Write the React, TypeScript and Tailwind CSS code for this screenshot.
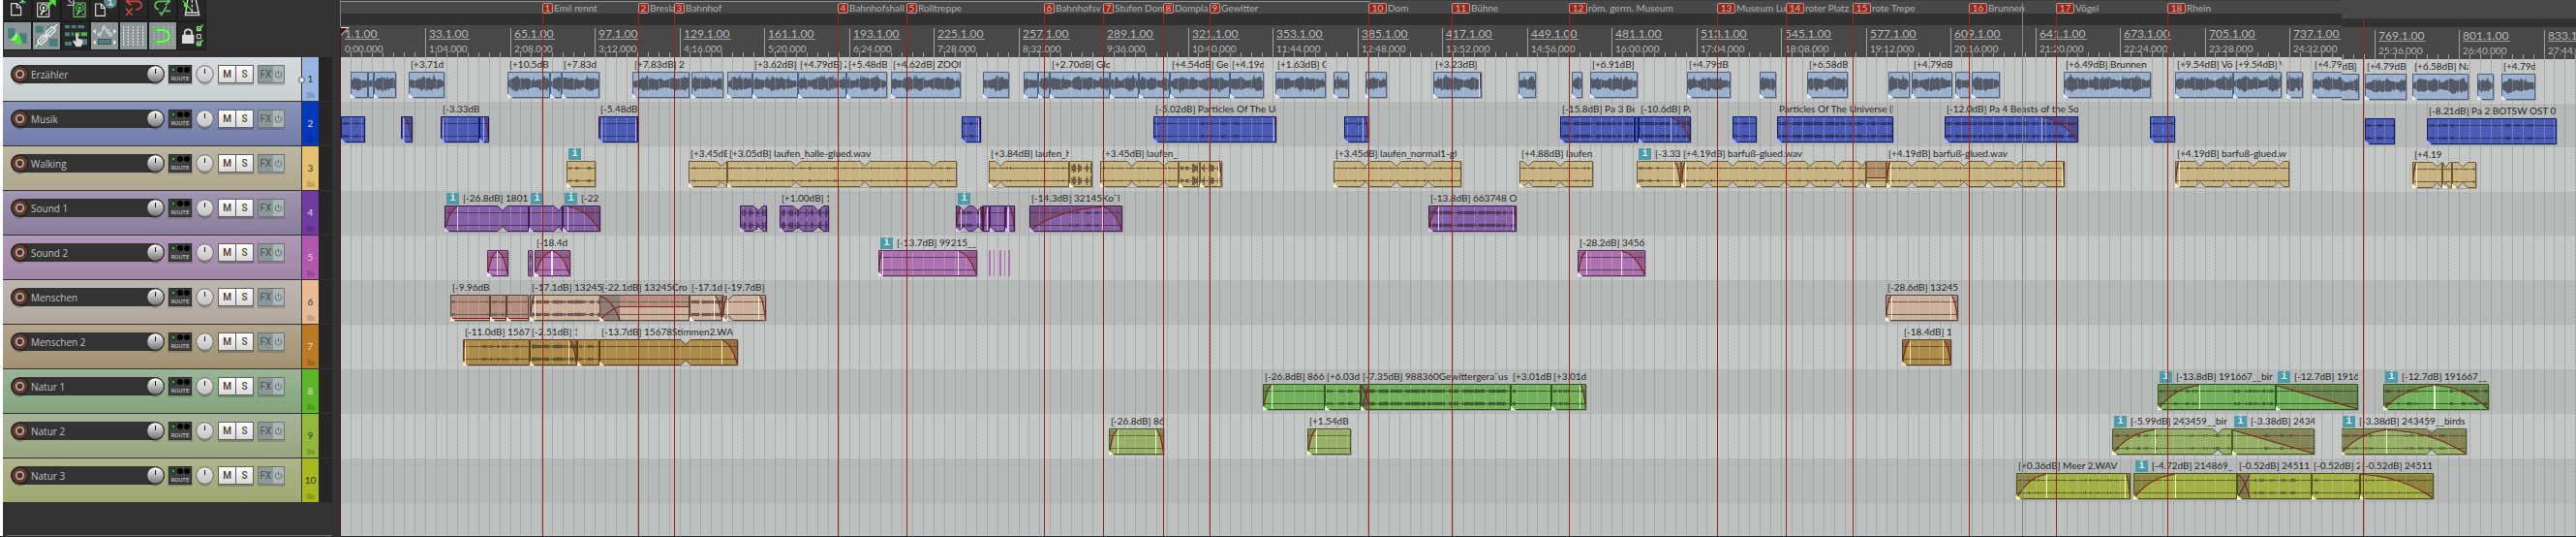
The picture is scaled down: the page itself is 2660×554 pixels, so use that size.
import type { ReactNode } from "react";

/* ---------- model ---------- */

type WaveKind = "voice" | "none" | "dots" | "sparse" | "thick" | "burst";

interface Clip {
  start: number;
  end: number;
  label: string;
  info?: boolean;
  fadeIn?: number;
  fadeOut?: number;
  linear?: boolean;
  notches?: number[];
  wave?: WaveKind;
  level?: number;
  cross?: number;
}

interface Track {
  name: string;
  header: string;
  tab: string;
  tabText: string;
  fill: string;
  edge: string;
  ink: string;
  glow: string;
  wave: WaveKind;
  clips: Clip[];
}

const c = (start: number, end: number, label = "", more: Partial<Clip> = {}): Clip => ({ start, end, label, ...more });

const tracks: Track[] = [
  {
    name: "Erzähler", header: "bg-linear-to-b from-[#d5dadd] to-[#cacfd2]", tab: "bg-[#98b6e2]", tabText: "text-[#333333]",
    fill: "#9bb1ce", edge: "#4a5f7c", ink: "#535a66", glow: "#e4edf8", wave: "voice",
    clips: [
      c(362, 380), c(380, 386), c(386, 409), c(422, 459, "[+3.71d"),
      c(524, 568, "[+10.5dB"), c(568, 580), c(580, 619, "[+7.83d"), c(653, 712, "[+7.83dB] 2"), c(714, 747),
      c(751, 777), c(777, 824, "[+3.62dB]"), c(824, 874, "[+4.79dB] Z"), c(874, 916, "[+5.48dB"), c(920, 992, "[+4.62dB] ZOOM"),
      c(1015, 1042), c(1057, 1072), c(1072, 1084), c(1084, 1146, "[+2.70dB] Glo"), c(1146, 1176), c(1176, 1208),
      c(1208, 1270, "[+4.54dB] Ge"), c(1270, 1305, "[+4.19d"), c(1317, 1369, "[+1.63dB] G"), c(1377, 1393), c(1410, 1432),
      c(1480, 1530, "[+3.23dB]", { fadeOut: 2 }), c(1568, 1586), c(1623, 1634), c(1642, 1691, "[+6.91dB]"),
      c(1742, 1787, "[+4.79dB"), c(1817, 1834), c(1866, 1908, "[+6.58dB"), c(1950, 1972), c(1974, 2016, "[+4.79dB"),
      c(2019, 2034), c(2036, 2065), c(2131, 2221, "[+6.49dB] Brunnen"), c(2246, 2306, "[+9.54dB] Vö"), c(2306, 2356, "[+9.54dB] V"),
      c(2361, 2378), c(2388, 2436, "[+4.79dB]"), c(2442, 2485, "[+4.79dB"), c(2491, 2549, "[+6.58dB] Na"), c(2558, 2575), c(2583, 2618, "[+4.79d"),
    ],
  },
  {
    name: "Musik", header: "bg-linear-to-b from-[#8a95ba] to-[#747ba9]", tab: "bg-[#0039b9]", tabText: "text-[#dddddd]",
    fill: "#4c5cb6", edge: "#0b1c68", ink: "#2f3468", glow: "#a8b4ff", wave: "sparse",
    clips: [
      c(352, 377), c(414, 426, "", { fadeIn: 2, fadeOut: 9, wave: "none" }), c(455, 495, "[-3.33dB", { fadeIn: 2, wave: "none" }),
      c(495, 505, "", { fadeOut: 5, wave: "none" }), c(618, 659, "[-5.48dB", { fadeIn: 3, fadeOut: 2, wave: "none" }),
      c(993, 1013, "", { fadeOut: 2 }), c(1191, 1318, "[-5.02dB] Particles Of The Ur", { fadeOut: 2 }), c(1388, 1414, "", { fadeOut: 6 }),
      c(1611, 1688, "[-15.8dB] Pa 3 Be", { wave: "thick" }), c(1688, 1692), c(1692, 1746, "[-10.6dB] Pa", { fadeOut: 20, wave: "thick" }),
      c(1789, 1814), c(1835, 1955, "Particles Of The Universe (I", { wave: "thick" }),
      c(2008, 2146, "[-12.0dB] Pa 4 Beasts of the So", { fadeOut: 37, wave: "thick" }), c(2220, 2246),
      c(2442, 2473), c(2506, 2640, "[-8.21dB] Pa 2 BOTSW OST 07"),
    ],
  },
  {
    name: "Walking", header: "bg-linear-to-b from-[#bbb6a2] to-[#b0a78f]", tab: "bg-[#e3c070]", tabText: "text-[#333333]",
    fill: "#c9b381", edge: "#6a5830", ink: "#6b5e42", glow: "#fff4cf", wave: "dots",
    clips: [
      c(585, 615, "", { info: true, wave: "sparse" }), c(711, 751, "[+3.45dB", { notches: [745] }),
      c(751, 988, "[+3.05dB] laufen_halle-glued.wav", { notches: [822, 893, 964] }),
      c(1021, 1104, "[+3.84dB] laufen_h", { notches: [1033] }), c(1104, 1128, "", { wave: "burst" }),
      c(1136, 1217, "[+3.45dB] laufen_", { notches: [1169, 1202] }), c(1217, 1239, "", { wave: "burst" }), c(1239, 1262, "", { fadeOut: 3, wave: "burst" }),
      c(1377, 1509, "[+3.45dB] laufen_normal1-gl", { notches: [1410, 1442, 1475] }), c(1569, 1645, "[+4.88dB] laufen", { notches: [1578, 1611] }),
      c(1690, 1736, "[-3.33", { info: true, fadeOut: 7, wave: "sparse" }),
      c(1736, 1927, "[+4.19dB] barfuß-glued.wav", { fadeIn: 4, notches: [1763, 1789, 1817, 1843, 1869, 1897, 1923] }),
      c(1927, 1948, "", { level: 17, wave: "none" }),
      c(1948, 2132, "[+4.19dB] barfuß-glued.wav", { fadeIn: 4, fadeOut: 2, notches: [1974, 2002, 2028, 2054, 2082, 2108] }),
      c(2246, 2364, "[+4.19dB] barfuß-glued.w", { fadeIn: 4, notches: [2272, 2299, 2327, 2353] }),
      c(2488, 2489), c(2491, 2522, "[+4.19", { fadeIn: 4, notches: [2517] }), c(2522, 2532, "", { notches: [2525] }), c(2532, 2557, "", { notches: [2543] }),
    ],
  },
  {
    name: "Sound 1", header: "bg-linear-to-b from-[#a096b0] to-[#8b7d9d]", tab: "bg-[#703a9e]", tabText: "text-[#dddddd]",
    fill: "#8661a5", edge: "#3c1c58", ink: "#4d3b5e", glow: "#dfc4f8", wave: "none",
    clips: [
      c(459, 546, "[-26.8dB] 1801", { info: true, fadeIn: 13, notches: [519] }), c(546, 581, "", { info: true, notches: [577] }),
      c(581, 620, "[-22", { info: true, fadeOut: 33 }), c(764, 792, "", { notches: [783], wave: "burst" }),
      c(805, 856, "[+1.00dB] 1", { notches: [824, 845], wave: "burst" }), c(987, 1015, "", { info: true, fadeIn: 5, fadeOut: 3, notches: [995, 1010], wave: "thick" }),
      c(1015, 1022, "", { fadeIn: 4 }), c(1022, 1038), c(1038, 1048, "", { fadeIn: 2, fadeOut: 6 }),
      c(1063, 1159, "[-14.3dB] 32145Ko¨l", { fadeIn: 75, fadeOut: 20, wave: "sparse" }), c(1475, 1566, "[-13.8dB] 663748 O", { fadeIn: 10, fadeOut: 3, wave: "thick" }),
    ],
  },
  {
    name: "Sound 2", header: "bg-linear-to-b from-[#ad9ab5] to-[#a085a6]", tab: "bg-[#b158af]", tabText: "text-[#dddddd]",
    fill: "#ad72b0", edge: "#5d2e64", ink: "#5a3a60", glow: "#ffe4ff", wave: "none",
    clips: [
      c(503, 525, "", { fadeIn: 10, fadeOut: 11 }), c(545, 550, "", { wave: "burst" }), c(552, 589, "[-18.4d", { fadeIn: 17, fadeOut: 18 }),
      c(907, 1009, "[-13.7dB] 99215__", { info: true, fadeIn: 4, fadeOut: 19 }),
      c(1021, 1023), c(1026, 1027), c(1032, 1034), c(1037, 1038), c(1041, 1043),
      c(1629, 1699, "[-28.2dB] 3456", { fadeIn: 9, fadeOut: 24 }),
    ],
  },
  {
    name: "Menschen", header: "bg-linear-to-b from-[#beb7af] to-[#b1a79e]", tab: "bg-[#e9bb95]", tabText: "text-[#333333]",
    fill: "#cdb19c", edge: "#594438", ink: "#6c5950", glow: "#fff6e4", wave: "none",
    clips: [
      c(465, 506, "[-9.96dB", { level: 24, wave: "sparse" }), c(506, 523, "", { level: 24, wave: "sparse" }), c(523, 546, "", { level: 24, wave: "dots" }),
      c(547, 641, "[-17.1dB] 13245", { fadeIn: 5, wave: "thick" }), c(619, 712, "[-22.1dB] 13245Cro", { cross: 21, level: 12 }),
      c(712, 746, "[-17.1d", { fadeOut: 8, wave: "thick" }), c(746, 791, "[-19.7dB]", { fadeIn: 5, fadeOut: 7, notches: [752] }),
      c(1947, 2022, "[-28.6dB] 13245", { fadeIn: 6, fadeOut: 7 }),
    ],
  },
  {
    name: "Menschen 2", header: "bg-linear-to-b from-[#b1a58b] to-[#a29272]", tab: "bg-[#ba7b24]", tabText: "text-[#dddddd]",
    fill: "#af8b4a", edge: "#57401a", ink: "#5e4e2e", glow: "#ffe9b0", wave: "sparse",
    clips: [
      c(478, 547, "[-11.0dB] 1567", { fadeIn: 2 }), c(547, 596, "[-2.51dB] 1", { fadeOut: 8, wave: "thick" }), c(596, 619),
      c(619, 762, "[-13.7dB] 15678Stimmen2.WA", { fadeOut: 16, notches: [708], wave: "none" }), c(1964, 2015, "[-18.4dB] 1", { fadeIn: 8, fadeOut: 8, wave: "none" }),
    ],
  },
  {
    name: "Natur 1", header: "bg-linear-to-b from-[#9ab597] to-[#83a37b]", tab: "bg-[#5fb528]", tabText: "text-[#dddddd]",
    fill: "#72b059", edge: "#2c561b", ink: "#3c5a32", glow: "#dcffd0", wave: "sparse",
    clips: [
      c(1304, 1368, "[-26.8dB] 866", { fadeIn: 9, wave: "none" }), c(1368, 1405, "[+6.03d"),
      c(1405, 1560, "[-7.35dB] 988360Gewittergera¨us", { cross: 9, wave: "thick" }), c(1560, 1602, "[+3.01dB"), c(1602, 1638, "[+3.01d", { fadeOut: 6 }),
      c(2228, 2350, "[-13.8dB] 191667__bir", { info: true, fadeIn: 43 }), c(2350, 2435, "[-12.7dB] 1916", { info: true, fadeOut: 85, linear: true, wave: "none" }),
      c(2461, 2570, "[-12.7dB] 191667__", { info: true, fadeIn: 53, fadeOut: 56 }),
    ],
  },
  {
    name: "Natur 2", header: "bg-linear-to-b from-[#a8b499] to-[#99a57f]", tab: "bg-[#94b83c]", tabText: "text-[#333333]",
    fill: "#97b065", edge: "#465a24", ink: "#5a6840", glow: "#eaffc4", wave: "sparse",
    clips: [
      c(1145, 1202, "[-26.8dB] 86", { fadeIn: 9, fadeOut: 8, wave: "none" }), c(1350, 1395, "[+1.54dB", { fadeIn: 9, wave: "none" }),
      c(2181, 2305, "[-5.99dB] 243459__bir", { info: true, fadeIn: 44, notches: [2290] }),
      c(2305, 2390, "[-3.38dB] 2434", { info: true, fadeOut: 85, linear: true }),
      c(2417, 2547, "[-3.38dB] 243459__birds", { info: true, fadeIn: 47, fadeOut: 82, notches: [2511] }),
    ],
  },
  {
    name: "Natur 3", header: "bg-linear-to-b from-[#adb58a] to-[#9fa772]", tab: "bg-[#a7b820]", tabText: "text-[#333333]",
    fill: "#a3b044", edge: "#4c5316", ink: "#5e6630", glow: "#f6ffb4", wave: "dots",
    clips: [
      c(2082, 2200, "[+0.36dB] Meer 2.WAV", { fadeIn: 31, fadeOut: 5 }), c(2203, 2310, "[-4.72dB] 214869_", { info: true, fadeIn: 43, wave: "none" }),
      c(2310, 2387, "[-0.52dB] 24511", { cross: 13, wave: "sparse" }), c(2387, 2437, "[-0.52dB] 2", { wave: "sparse" }),
      c(2437, 2513, "[-0.52dB] 24511", { fadeOut: 75 }),
    ],
  },
];

const markers: [number, string][] = [
  [560, "Emil rennt"], [659, "Bresla"], [696, "Bahnhof"], [865, "Bahnhofshall"], [936, "Rolltreppe"], [1078, "Bahnhofsv"],
  [1139, "Stufen Dom"], [1201, "Dompla"], [1249, "Gewitter"], [1413, "Dom"], [1499, "Bühne"], [1620, "röm. germ. Museum"],
  [1773, "Museum Lu"], [1844, "roter Platz"], [1913, "rote Trepe"], [2033, "Brunnen"], [2123, "Vögel"], [2238, "Rhein"],
];

const RULER_START = 352;
const BAR_GAP = 87.5;
const TICK_GAP = BAR_GAP / 8;
const gridXs = Array.from({ length: 212 }, (_, i) => Math.floor(RULER_START + i * TICK_GAP));

/* ---------- clip drawing ---------- */

function random(seed: number) {
  let s = (seed * 2654435761) >>> 0;
  return () => {
    s = (s * 1664525 + 1013904223) >>> 0;
    return s / 4294967296;
  };
}

function voicePath(start: number, w: number) {
  const r = random(start + 11);
  const phase = r() * 6;
  const top: string[] = [];
  const bottom: string[] = [];
  for (let x = 1; x < w; x++) {
    const swell = 0.65 + 0.2 * Math.sin(x / 5 + phase) + 0.15 * Math.sin(x / 2.3 + phase * 2);
    const edge = Math.min(1, (x + 3) / 6, (w - x + 3) / 6);
    const up = (2 + swell * 5 * (0.6 + r() * 0.8)) * edge + (r() > 0.93 ? 3 : 0);
    const down = (2 + swell * 5 * (0.6 + r() * 0.8)) * edge + (r() > 0.93 ? 2 : 0);
    top.push(`${x},${(12.5 - up).toFixed(1)}`);
    bottom.unshift(`${x},${(12.5 + down).toFixed(1)}`);
  }
  return `M${top.join("L")}L${bottom.join("L")}Z`;
}

function stereoPath(kind: WaveKind, start: number, w: number) {
  const r = random(start + 5);
  const phase = r() * 6;
  const rects: string[] = [];
  let run = 0;
  let on = false;
  for (let x = 2; x < w - 1; x++) {
    if (kind === "dots") {
      on = x % 9 === 4 || (x % 13 === 6 && r() > 0.5);
    } else if (run-- <= 0) {
      on = !on;
      const long = kind === "thick" ? 22 : kind === "burst" ? 4 : 4;
      run = on ? 1 + r() * long : r() * (kind === "sparse" ? 8 : 3);
    }
    if (!on) continue;
    if (kind === "sparse" && w > 40 && Math.sin(x / 12 + phase) < -0.2) continue;
    const h = kind === "burst" ? 1 + r() * 4 : kind === "thick" ? 1.3 + r() * 0.6 : 0.8 + r() * 0.8;
    for (const mid of [7.5, 20.5]) rects.push(`M${x} ${(mid - h).toFixed(1)}h1v${(2 * h).toFixed(1)}h-1z`);
  }
  return rects.join("");
}

function outline(w: number, notches: number[]) {
  const n = notches.filter((x) => x > 0 && x < w).map((x) => [Math.max(0.5, x - 5), x, Math.min(w - 0.5, x + 5)]);
  const top = n.map(([a, b, z]) => `L${a} .5L${b} 5.5L${z} .5`).join("");
  const bottom = [...n].reverse().map(([a, b, z]) => `L${z} 26.5L${b} 21.5L${a} 26.5`).join("");
  return `M.5 .5${top}L${w - 0.5} .5L${w - 0.5} 26.5${bottom}L.5 26.5Z`;
}

function ClipView({ clip, track, origin }: { clip: Clip; track: Track; origin: number }) {
  const w = clip.end - clip.start;
  const kind = clip.wave ?? track.wave;
  const { fadeIn = 0, fadeOut = 0, cross = 0 } = clip;
  const shape = outline(w, (clip.notches ?? []).map((x) => x - clip.start));
  const inPath = `M.5 26Q${fadeIn * 0.4} 4 ${fadeIn} 1.5`;
  const outPath = clip.linear ? `M${w - fadeOut} 1.5L${w - 0.5} 26` : `M${w - fadeOut} 1.5Q${w - fadeOut * 0.45} 3 ${w - 0.5} 26`;
  return (
    <div className="absolute inset-y-0 z-10" style={{ left: clip.start - origin, width: w }}>
      <div className="flex h-[15px] items-center gap-1 overflow-hidden pl-0.5 text-[10px] leading-[15px] whitespace-pre text-[#262626]">
        {clip.info && (
          <span className="flex h-3 w-[13px] shrink-0 items-center justify-center bg-[#4e9ba7] font-['Liberation_Mono',monospace] text-[11px] font-bold text-[#dcebed]">i</span>
        )}
        {clip.label && <span>{clip.label}</span>}
      </div>
      <svg className="block overflow-visible" width={w} height={28} viewBox={`0 0 ${w} 28`} aria-hidden="true">
        {w > 3 && <path d={`M${w + 0.5} 1V27.5H1`} fill="none" stroke="#8f8f8f" strokeOpacity={0.7} />}
        <path d={shape} fill={track.fill} />
        {clip.level !== undefined && <path d={`M${cross} 1H${w}V${clip.level}H${cross}Z`} fill="#7a4038" fillOpacity={0.3} />}
        {kind === "voice" ? (
          <path d={voicePath(clip.start, w)} fill={track.ink} />
        ) : (
          w > 3 && (
            <>
              <path d={`M1 7.5H${w - 1}M1 20.5H${w - 1}`} stroke={track.ink} />
              {kind !== "none" && <path d={stereoPath(kind, clip.start, w)} fill={track.ink} />}
            </>
          )
        )}
        {gridXs.filter((g) => g > clip.start && g < clip.end - 1).map((g) => (
          <path key={g} d={`M${g - clip.start + 0.5} 1V26`} stroke="#cfcfcf" strokeOpacity={0.55} strokeDasharray="1 1" />
        ))}
        {fadeIn > 0 && (
          <>
            <path d={`${inPath}L.5 1.5Z`} fill="#5a2a35" fillOpacity={0.32} />
            <path d={`M${Math.round(fadeIn) + 0.5} 1V26`} stroke={track.glow} />
            <path d={inPath} fill="none" stroke="#7c211c" strokeWidth={1.2} />
          </>
        )}
        {fadeOut > 0 && (
          <>
            <path d={`${outPath}L${w - 0.5} 1.5Z`} fill="#5a2a35" fillOpacity={0.32} />
            {!clip.linear && <path d={`M${w - fadeOut - 0.5} 1V26`} stroke={track.glow} />}
            <path d={outPath} fill="none" stroke="#7c211c" strokeWidth={1.2} />
          </>
        )}
        {cross > 0 && (
          <>
            <rect x={0} y={1} width={cross} height={26} fill="#5c5558" fillOpacity={0.55} />
            <path d={`M0 1.5Q${cross * 0.6} 4 ${cross} 26M0 26Q${cross * 0.5} 16 ${cross} ${clip.level ?? 1.5}`} fill="none" stroke="#7c211c" strokeWidth={1.2} />
          </>
        )}
        {clip.level !== undefined && <path d={`M${cross} ${clip.level + 0.5}H${w - 1}`} stroke="#7c211c" />}
        <path d={shape} fill="none" stroke={w > 3 ? track.edge : track.fill} />
        {w > 9 && <path d="M0 22.5L5.500 27.500H0Z" fill={track.glow} />}
      </svg>
    </div>
  );
}

/* ---------- timeline ---------- */

const laneHeights = {
  main: ["h-[46px]", "h-[46px]", "h-[46px]", "h-[46px]"],
  side: ["h-[46px]", "h-[45px]", "h-[46px]", "h-[45px]"],
};

function Lanes({ origin, until, variant }: { origin: number; until: number; variant: "main" | "side" }) {
  const lines = gridXs.filter((g) => g > origin && g < until);
  return (
    <div className="relative flex flex-1 flex-col">
      {tracks.map((track, i) => (
        <div key={track.name} className={`relative shrink-0 ${laneHeights[variant][i] ?? "h-[46px]"} ${i % 2 ? "bg-[#b7b9b8]" : "bg-[#c5c7c6]"}`}>
          {track.clips
            .filter((clip) => clip.end > origin + 1 && clip.start < until - 1)
            .map((clip) => <ClipView key={clip.start} clip={clip} track={track} origin={origin} />)}
        </div>
      ))}
      <div className="min-h-[34px] flex-1 bg-[#bec0bf]" />
      <svg className="absolute inset-0 size-full" aria-hidden="true">
        {lines.map((g) => (
          <line key={g} x1={g - origin + 0.5} x2={g - origin + 0.5} y1={0} y2="100%" stroke="#8f9190" strokeDasharray="1 1" />
        ))}
      </svg>
    </div>
  );
}

function Ruler({ origin, until }: { origin: number; until: number }) {
  const bars = Array.from({ length: 27 }, (_, i) => i).filter((i) => {
    const x = RULER_START + i * BAR_GAP;
    return x >= origin && x < until;
  });
  return (
    <div className="relative h-[33px] shrink-0 bg-[#484848] text-[#b8b8b8]">
      <svg className="absolute inset-0 size-full" aria-hidden="true">
        {gridXs.filter((g) => g > origin && g < until).map((g) => (
          <line key={g} x1={g - origin + 0.5} x2={g - origin + 0.5} y1={(gridXs.indexOf(g) % 8) ? 28 : 3} y2={33} stroke="#a0a0a0" />
        ))}
      </svg>
      {bars.map((i) => {
        const seconds = i * 64;
        const time = `${Math.floor(seconds / 60)}:${String(seconds % 60).padStart(2, "0")}.000`;
        return (
          <div key={i} className="absolute top-[3px] flex flex-col items-start" style={{ left: Math.floor(RULER_START + i * BAR_GAP) - origin + 4 }}>
            <span className="border-b border-[#a0a0a0] pr-0.5 text-[12px] leading-[11px]">{i * 32 + 1}.1.00</span>
            <span className="pt-[3px] text-[10px] leading-[12px]">{time}</span>
          </div>
        );
      })}
    </div>
  );
}

function MarkerFlags() {
  return (
    <div className="relative h-3 shrink-0 bg-[#484848]">
      {markers.map(([x, name], i) => {
        const next = markers[i + 1]?.[0] ?? x + 120;
        return (
          <div key={name} className="absolute top-px flex h-[11px] items-center gap-px overflow-hidden text-[10px] leading-[11px] whitespace-nowrap text-[#b0b0b0]" style={{ left: x - 352, width: next - x }}>
            <span className={`flex h-[11px] shrink-0 items-center justify-center rounded-[2px] border border-[#b59a96] bg-[#96281b] text-[#cfb4b0] ${i < 9 ? "w-[11px]" : "w-[19px]"}`}>{i + 1}</span>
            <span>{name}</span>
          </div>
        );
      })}
    </div>
  );
}

function Timeline() {
  return (
    <main className="relative flex min-w-0 flex-1 flex-col overflow-hidden">
      <div className="h-px shrink-0 bg-[#3c3c3c]" />
      <div className="h-px shrink-0 bg-[#484848]">
        <div className="h-px w-[1063px] bg-[#8f9492]" />
      </div>
      <MarkerFlags />
      <div className="h-3 shrink-0 bg-[#323232]" />
      <Ruler origin={352} until={2418} />
      <Lanes origin={352} until={2418} variant="main" />
      {markers.map(([x, name]) => (
        <div key={name} className="absolute top-[13px] bottom-0 z-20 w-px bg-[#93271b]" style={{ left: x - 352 }} />
      ))}
      <div className="absolute top-[3px] bottom-0 left-[1736px] z-20 w-px bg-[#7f8786]" />
      <svg className="absolute top-7 left-0" width={9} height={9} viewBox="0 0 9 9" aria-hidden="true">
        <path d="M0 .5H8L0 8Z" fill="#4a1a16" />
        <path d="M0 .5H8L0 8.500" fill="none" stroke="#eeeeee" />
      </svg>
    </main>
  );
}

function TimelineEnd() {
  return (
    <section className="relative flex w-[242px] shrink-0 flex-col overflow-hidden">
      <div className="h-[19px] shrink-0 bg-[#484848]" />
      <div className="h-[9px] shrink-0 bg-[#323232]" />
      <Ruler origin={2418} until={2662} />
      <Lanes origin={2418} until={2662} variant="side" />
      <div className="absolute top-[19px] bottom-0 left-[22px] z-20 w-px bg-[#93271b]" />
    </section>
  );
}

/* ---------- toolbar ---------- */

const pale = "#d9d9d9";
const teal = "#4a7d80";
const green = "#52e03c";

function Drive({ x, color }: { x: number; color: string }) {
  return (
    <g transform={`translate(${x} 0)`} fill="none" stroke={color} strokeWidth={3.5}>
      <rect x={2} y={9} width={36} height={43} rx={2} />
      <circle cx={21} cy={24} r={11} />
      <circle cx={21} cy={24} r={3} fill={color} />
      <path d="M12 46L22 30" strokeWidth={6} />
      <path d="M28 44H34" />
    </g>
  );
}

const topTools: [string, ReactNode][] = [
  ["New project", <>
    <path d="M23 11H41L53 23V47H23ZM40 11V24H53" fill="none" stroke={pale} strokeWidth={3.5} />
    <path d="M58 -8V11M49 -6L67 9M67 -6L49 9" stroke="#6fd07a" strokeWidth={4} />
  </>],
  ["Open project", <>
    <Drive x={12} color={pale} />
    <path d="M42 22L58 6" stroke={green} strokeWidth={9} />
    <path d="M48 -2H71V20Z" fill={green} />
  </>],
  ["Save project", <>
    <Drive x={34} color="#62c463" />
    <path d="M14 -6L30 10M36 -4V16H16" stroke="#b5b5b5" strokeWidth={4} fill="none" />
  </>],
  ["Project settings", <>
    <path d="M14 12H32L43 24V49H14ZM31 12V25H43" fill="none" stroke={pale} strokeWidth={3.5} />
    <circle cx={60} cy={6} r={20} fill="#5b8587" />
    <path d="M54 2L61 -4V15M54 15H68" fill="none" stroke={pale} strokeWidth={4} />
  </>],
  ["Undo", <path d="M18 4H56Q68 6 66 18Q64 29 48 30M34 -8L20 4L34 16M18 26L38 48M38 26L18 48" fill="none" stroke="#c8473c" strokeWidth={5} />],
  ["Redo", <path d="M66 4H30Q18 6 18 18Q20 28 30 29M50 -8L64 4L50 16M32 36L38 46L54 20M50 34H66" fill="none" stroke="#5fbf6a" strokeWidth={5} />],
  ["Metronome", <>
    <path d="M30 -4H54L65 47H22Z" fill="none" stroke={pale} strokeWidth={4} />
    <path d="M24 39H63M43 0V8M43 14V22M43 28V36" stroke={pale} strokeWidth={4} />
    <path d="M14 2L44 34" stroke={green} strokeWidth={4} />
    <rect x={18} y={10} width={12} height={12} fill={green} />
  </>],
];

const bottomTools: [string, boolean, ReactNode][] = [
  ["Auto-crossfade", true, <>
    <path d="M12 18H34V50H12ZM45 34H71V66H45Z" fill={teal} />
    <path d="M20 56L42 30V66L32 56Z" fill="#8dff62" />
    <path d="M46 34L58 66H32Z" fill={green} />
  </>],
  ["Item grouping", true, <>
    <path d="M8 11H32V32H8ZM45 11H66V24H45ZM8 50H22V74H8ZM50 50H77V74H50Z" fill={teal} />
    <path d="M8 76L76 6" stroke="#e8e8e8" strokeWidth={4} />
    <g fill="none" stroke="#e8e8e8" strokeWidth={5} transform="rotate(-45 42 42)">
      <rect x={8} y={33} width={32} height={17} rx={8} />
      <rect x={44} y={33} width={32} height={17} rx={8} />
    </g>
  </>],
  ["Ripple editing", false, <>
    <path d="M9 9H24V19H9ZM29 9H44V19H29ZM49 9H69V19H49ZM9 31H24V43H9ZM29 31H36V43H29ZM9 60H30V72H9ZM58 52H78V70H58Z" fill={teal} />
    <path d="M40 31H55V43H40ZM59 31H78V43H59Z" fill="#4fb04b" />
    <path d="M43 36Q47 33 50 37V50L64 54V66L58 76H44L33 58Q35 54 43 60Z" fill={pale} />
  </>],
  ["Move envelope points", true, <>
    <path d="M20 38H28L40 16L54 30L62 38" fill="none" stroke="#eeeeee" strokeWidth={3} />
    <path d="M22 34h8v8h-8zM36 12h8v8h-8zM48 24h8v8h-8zM56 34h8v8h-8z" fill="#8c9696" stroke="#eeeeee" strokeWidth={2.500} />
    <path d="M14 20V36L6 28ZM70 20V36L78 28ZM14 54V70L6 62ZM70 54V70L78 62Z" fill="#f4f4f4" />
    <rect x={22} y={53} width={39} height={15} fill={teal} stroke="#26383a" strokeWidth={2} />
  </>],
  ["Grid lines", true, <path d="M11 12V74M25 12V74M40 12V74M55 12V74M71 12V74" stroke="#f0f0f0" strokeWidth={3} strokeDasharray="6 3" />],
  ["Snap", true, <>
    <path d="M15 12V74M30 12V74M45 12V74M60 12V74M74 12V74" stroke="#b9c2c2" strokeWidth={3} strokeDasharray="6 3" />
    <path d="M14 24H42Q62 26 62 42Q62 58 42 60H14" fill="none" stroke="#3fd23c" strokeWidth={11} />
    <path d="M24 24H42Q62 26 62 42Q62 58 42 60H24" fill="none" stroke="#9af58a" strokeWidth={4} />
  </>],
  ["Locking", false, <>
    <path d="M20 40V32Q21 22 31 22Q41 22 42 32V40" fill="none" stroke={pale} strokeWidth={5} />
    <rect x={12} y={38} width={37} height={28} rx={2} fill={pale} />
    <path d="M58 14h12v12h-12zM58 38h12v12h-12zM58 60h12v12h-12z" fill="none" stroke={pale} strokeWidth={3} />
    <path d="M58 16L64 24L76 8M58 62L64 70L76 54" fill="none" stroke={green} strokeWidth={5} />
  </>],
];

function Toolbar() {
  return (
    <div className="flex h-[59px] shrink-0 flex-col pl-px">
      <div className="flex h-[23px] w-[209px] shrink-0 gap-0.5 bg-[#1c1c1c] pb-0.5">
        {topTools.map(([name, icon]) => (
          <button key={name} type="button" aria-label={name} className="h-[21px] w-7 overflow-hidden bg-[#272727]">
            <svg width={28} height={21} viewBox="0 0 84 63" aria-hidden="true">{icon}</svg>
          </button>
        ))}
      </div>
      <div className="flex h-[29px] w-[209px] shrink-0 gap-0.5 bg-[#1c1c1c] pb-px">
        {bottomTools.map(([name, active, icon]) => (
          <button key={name} type="button" aria-label={name} aria-pressed={active} className={`h-7 w-7 ${active ? "bg-[#8c9696]" : "bg-[#272727]"}`}>
            <svg width={28} height={28} viewBox="0 0 84 84" aria-hidden="true">{icon}</svg>
          </button>
        ))}
      </div>
    </div>
  );
}

/* ---------- track list ---------- */

function Knob({ label, dark }: { label: string; dark?: boolean }) {
  const id = dark ? "knob-volume" : "knob-pan";
  return (
    <label className="relative block size-[19px] shrink-0">
      <svg className="overflow-visible" width={19} height={19} viewBox="0 0 19 19" aria-hidden="true">
        <defs>
          <linearGradient id={id} x1="0" y1="0" x2="0" y2="1">
            <stop offset="0" stopColor={dark ? "#ffffff" : "#e8e8e8"} />
            <stop offset="1" stopColor={dark ? "#6f6f6f" : "#c2c2c2"} />
          </linearGradient>
        </defs>
        <ellipse cx={9.5} cy={12} rx={8} ry={9} fill="#000000" fillOpacity={0.2} />
        <circle cx={9.5} cy={9.5} r={8.800} fill={`url(#${id})`} stroke={dark ? "#2a2a2a" : "#6c6c6c"} />
        <path d="M9.500 4V9" stroke="#1c1c1c" />
      </svg>
      <input type="range" aria-label={label} defaultValue={50} className="absolute inset-0 size-full opacity-0" />
    </label>
  );
}

function TrackRow({ track, index }: { track: Track; index: number }) {
  return (
    <li className="flex h-[46px] shrink-0 pb-px">
      <div className={`flex flex-1 items-start gap-1 pt-2 pl-2 font-['Roboto',sans-serif] ${track.header}`}>
        <div className="flex h-[19px] w-[159px] shrink-0 items-center gap-0.5 rounded-full bg-[#333333]">
          <button type="button" aria-label={`Record ${track.name}`} className="size-[19px] shrink-0">
            <svg className="overflow-visible" width={19} height={19} viewBox="0 0 19 19" aria-hidden="true">
              <ellipse cx={9.500} cy={12} rx={8} ry={9} fill="#000000" fillOpacity={0.2} />
              <circle cx={9.500} cy={9.500} r={8.500} fill="#603c31" stroke="#2a2422" strokeWidth={1.500} />
              <circle cx={9.500} cy={9.500} r={3.700} fill="#4b332c" stroke="#c9b3ab" strokeWidth={1.600} />
            </svg>
          </button>
          <span className="flex-1 font-['Open_Sans',sans-serif] text-[10px] leading-[18px] text-[#c0c0c0]">{track.name}</span>
          <Knob label={`Volume ${track.name}`} dark />
        </div>
        <button type="button" className="flex h-[19px] w-6 flex-col items-center border border-[#2c2c2c] bg-[#404040] shadow-[0_1px_0_1px_rgba(0,0,0,0.12)]">
          <svg width={22} height={8} viewBox="0 0 22 8" aria-hidden="true">
            <circle cx={4} cy={4} r={2.300} fill="#3f9b4c" stroke="#111111" />
            <circle cx={11} cy={4} r={3} fill="#000000" />
            <circle cx={18} cy={4} r={3} fill="#000000" />
          </svg>
          <span className="text-[6px] leading-[9px] text-[#d8d8d8]">ROUTE</span>
        </button>
        <Knob label={`Pan ${track.name}`} />
        <div className="flex h-[19px] border border-[#5e5e5e] bg-[#5e5e5e] text-[10px] leading-[17px] font-medium shadow-[0_2px_0_0_rgba(0,0,0,0.2)]">
          <button type="button" aria-label={`Mute ${track.name}`} className="mr-px w-[17px] bg-linear-to-b from-white to-[#d8d8d8] text-[#4c332d]">M</button>
          <button type="button" aria-label={`Solo ${track.name}`} className="w-[17px] bg-linear-to-b from-white to-[#d8d8d8] text-[#4b5430]">S</button>
        </div>
        <div className="flex h-[19px] border border-[#6d7574] text-[10px] leading-[17px] text-[#4a5352] shadow-[0_2px_0_0_rgba(0,0,0,0.15)]">
          <button type="button" className="w-[15px] bg-[#8d9998]">FX</button>
          <button type="button" aria-label={`Bypass effects ${track.name}`} className="flex w-[11px] items-center justify-center bg-[#adb6b7]">
            <svg width={9} height={9} viewBox="0 0 9 9" fill="none" stroke="#5c6565" aria-hidden="true">
              <path d="M2.600 2.200A3.200 3.200 0 1 0 6.400 2.200M4.500 .800V4.500" />
            </svg>
          </button>
        </div>
      </div>
      <div className={`relative ml-px flex w-[17px] shrink-0 flex-col items-center justify-end pb-[3px] text-[10px] ${track.tab} ${track.tabText}`}>
        <span className="pb-[7px] leading-[14px]">{index + 1}</span>
        <svg width={8} height={6} viewBox="0 0 8 6" aria-hidden="true">
          <path d="M0 0H4L5 1.500H8V6H0Z" fill="#000000" fillOpacity={0.15} />
        </svg>
        {index === 0 && <span className="absolute top-5 -left-1 size-[7px] rounded-full border border-[#555555] bg-[#e6e6e6]" />}
      </div>
      <div className="w-[14px] shrink-0 bg-[#262626]" />
    </li>
  );
}

export default function App() {
  return (
    <div className="flex min-h-screen w-full overflow-hidden border-b border-[#2b2f33] bg-[#333333] font-['Lato',sans-serif]">
      <aside className="flex w-[352px] shrink-0 border-l-[3px] border-white">
        <div className="flex flex-1 flex-col">
          <Toolbar />
          <ol className="flex flex-col">
            {tracks.map((track, i) => <TrackRow key={track.name} track={track} index={i} />)}
          </ol>
          <div className="mt-auto ml-1 h-px bg-[#6e6e6e]" />
        </div>
        <div className="flex w-[9px] shrink-0 flex-col items-end">
          <div className="h-7 w-px bg-[#7c7c7c]" />
          <div className="w-px flex-1 bg-[#43150f]" />
        </div>
      </aside>
      <Timeline />
      <TimelineEnd />
    </div>
  );
}
